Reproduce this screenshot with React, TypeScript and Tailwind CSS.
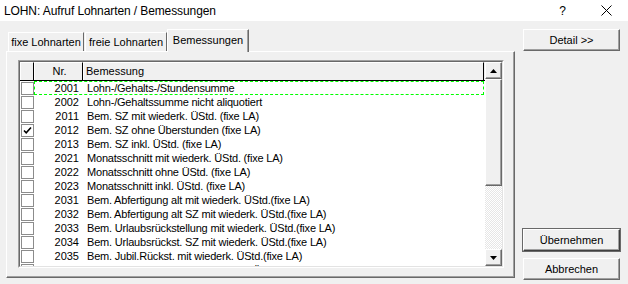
import React from "react";

const rows: [string, string, boolean][] = [
  ["2001", "Lohn-/Gehalts-/Stundensumme", false],
  ["2002", "Lohn-/Gehaltssumme nicht aliquotiert", false],
  ["2011", "Bem. SZ mit wiederk. ÜStd. (fixe LA)", false],
  ["2012", "Bem. SZ ohne Überstunden (fixe LA)", true],
  ["2013", "Bem. SZ inkl. ÜStd. (fixe LA)", false],
  ["2021", "Monatsschnitt mit wiederk. ÜStd. (fixe LA)", false],
  ["2022", "Monatsschnitt ohne ÜStd. (fixe LA)", false],
  ["2023", "Monatsschnitt inkl. ÜStd. (fixe LA)", false],
  ["2031", "Bem. Abfertigung alt mit wiederk. ÜStd.(fixe LA)", false],
  ["2032", "Bem. Abfertigung alt SZ mit wiederk. ÜStd.(fixe LA)", false],
  ["2033", "Bem. Urlaubsrückstellung mit wiederk. ÜStd.(fixe LA)", false],
  ["2034", "Bem. Urlaubsrückst. SZ mit wiederk. ÜStd.(fixe LA)", false],
  ["2035", "Bem. Jubil.Rückst. mit wiederk. ÜStd.(fixe LA)", false],
  ["2036", "Bem. Jubil.Rückst. SZ mit wiederk. ÜStd.(fixe LA)", false],
];

function Btn({ label, def }: { label: string; def?: boolean }) {
  return (
    <div
      className={
        "h-[22px] w-[97px] flex items-center justify-center border border-t-white border-l-white bg-[#f0f0f0] " +
        (def
          ? "border-r-[#404040] border-b-[#404040] shadow-[inset_-1px_-1px_0_#a0a0a0,0_0_0_1px_#696969]"
          : "border-r-[#696969] border-b-[#696969] shadow-[inset_-1px_-1px_0_#a0a0a0]")
      }
    >
      <span className="text-[11px] leading-none text-black">{label}</span>
    </div>
  );
}

function ScrollBtn({ up }: { up?: boolean }) {
  return (
    <div className="h-[17px] w-[17px] flex items-center justify-center bg-[#f0f0f0] border border-t-white border-l-white border-r-[#696969] border-b-[#696969] shadow-[inset_-1px_-1px_0_#a0a0a0]">
      <svg width="7" height="4" viewBox="0 0 7 4">
        {up ? <polygon points="3.5,0 7,4 0,4" fill="#000" /> : <polygon points="0,0 7,0 3.5,4" fill="#000" />}
      </svg>
    </div>
  );
}

export default function App() {
  return (
    <div
      className="w-[628px] h-[284px] bg-[#f0f0f0] flex flex-col overflow-hidden text-black"
      style={{ fontFamily: '"Liberation Sans", Arial, sans-serif' }}
    >
      {/* Title bar */}
      <div className="h-[21px] bg-white flex items-center shrink-0">
        <span className="ml-[4px] text-[12px] leading-none tracking-[-0.1px]">
          LOHN: Aufruf Lohnarten / Bemessungen
        </span>
        <div className="flex-1" />
        <span className="text-[12px] leading-none mr-[35px]">?</span>
        <svg width="11" height="11" viewBox="0 0 11 11" className="mr-[16px]">
          <path d="M0.5 0.5 L10.5 10.5 M10.5 0.5 L0.5 10.5" stroke="#000" strokeWidth="1" />
        </svg>
      </div>

      {/* Body */}
      <div className="flex flex-1">
        {/* Tab control */}
        <div className="ml-[6px] pt-[7px] pb-[6px] w-[509px] flex flex-col">
          <div className="h-[23px] flex items-end pl-[2px] text-[11px] leading-none">
            <div className="h-[19px] w-[76px] flex items-center justify-center border-t border-l border-t-white border-l-white border-r border-r-[#696969] bg-[#f0f0f0]">
              fixe Lohnarten
            </div>
            <div className="h-[19px] w-[82px] ml-[1px] flex items-center justify-center border-t border-l border-t-white border-l-white border-r border-r-[#696969] bg-[#f0f0f0]">
              freie Lohnarten
            </div>
            <div className="h-[23px] w-[82px] -mb-[1px] relative flex items-start pt-[5px] justify-center border-t border-l border-t-white border-l-white border-r border-r-[#696969] bg-[#f0f0f0] shadow-[inset_-1px_0_0_#a0a0a0]">
              Bemessungen
            </div>
          </div>
          <div className="flex-1 border border-t-white border-l-white border-r-[#696969] border-b-[#696969] shadow-[inset_-1px_-1px_0_#a0a0a0] pl-[11px] pt-[8px]">
            {/* Listview */}
            <div className="w-[486px] h-[208px] border border-t-[#a0a0a0] border-l-[#a0a0a0] border-r-white border-b-white">
              <div className="w-full h-full border border-t-[#696969] border-l-[#696969] border-r-[#e3e3e3] border-b-[#e3e3e3] bg-white flex overflow-hidden">
                <div className="flex-1 flex flex-col overflow-hidden">
                  {/* Header */}
                  <div className="h-[19px] shrink-0 flex bg-[#f0f0f0] border-b border-b-black text-[11px] leading-none">
                    <div className="w-[14px] border-r border-r-black border-l border-l-white border-t border-t-white" />
                    <div className="w-[49px] border-r border-r-black border-l border-l-white border-t border-t-white flex items-center justify-center pl-[2px]">
                      Nr.
                    </div>
                    <div className="flex-1 border-r border-r-black border-l border-l-white border-t border-t-white flex items-center pl-[2px] mr-[1px]">
                      Bemessung
                    </div>
                  </div>
                  {/* Rows */}
                  <div className="flex flex-col text-[11px] leading-none">
                    {rows.map(([nr, name, checked], i) => (
                      <div key={nr} className="h-[14px] shrink-0 flex items-center">
                        <div className="ml-[1px] w-[13px] h-[13px] border border-[#8c8c8c] bg-white flex items-center justify-center shrink-0">
                          {checked && (
                            <svg width="9" height="9" viewBox="0 0 9 9">
                              <path d="M1 4.5 L3.2 6.8 L8 1.5" stroke="#000" strokeWidth="1.6" fill="none" />
                            </svg>
                          )}
                        </div>
                        <div
                          className={
                            "flex-1 h-[14px] flex items-center mr-[1px] " +
                            (i === 0 ? "border border-dashed border-[#00ff00]" : "border border-transparent")
                          }
                        >
                          <span className="w-[44px] text-right">{nr}</span>
                          <span className="ml-[8px] whitespace-nowrap tracking-[-0.2px]">{name}</span>
                        </div>
                      </div>
                    ))}
                  </div>
                </div>
                {/* Scrollbar */}
                <div className="w-[17px] flex flex-col shrink-0">
                  <ScrollBtn up />
                  <div className="h-[107px] bg-[#f0f0f0] border border-t-white border-l-white border-r-[#696969] border-b-[#696969] shadow-[inset_-1px_-1px_0_#a0a0a0]" />
                  <div className="flex-1 bg-[repeating-conic-gradient(#ffffff_0_25%,#e6e6e6_0_50%)] bg-[length:2px_2px]" />
                  <ScrollBtn />
                </div>
              </div>
            </div>
          </div>
        </div>

        {/* Right buttons */}
        <div className="ml-[8px] w-[97px] pt-[8px] pb-[4px] flex flex-col">
          <Btn label="Detail >>" />
          <div className="flex-1" />
          <Btn label="Übernehmen" def />
          <div className="h-[7px]" />
          <Btn label="Abbrechen" />
        </div>
      </div>
    </div>
  );
}
